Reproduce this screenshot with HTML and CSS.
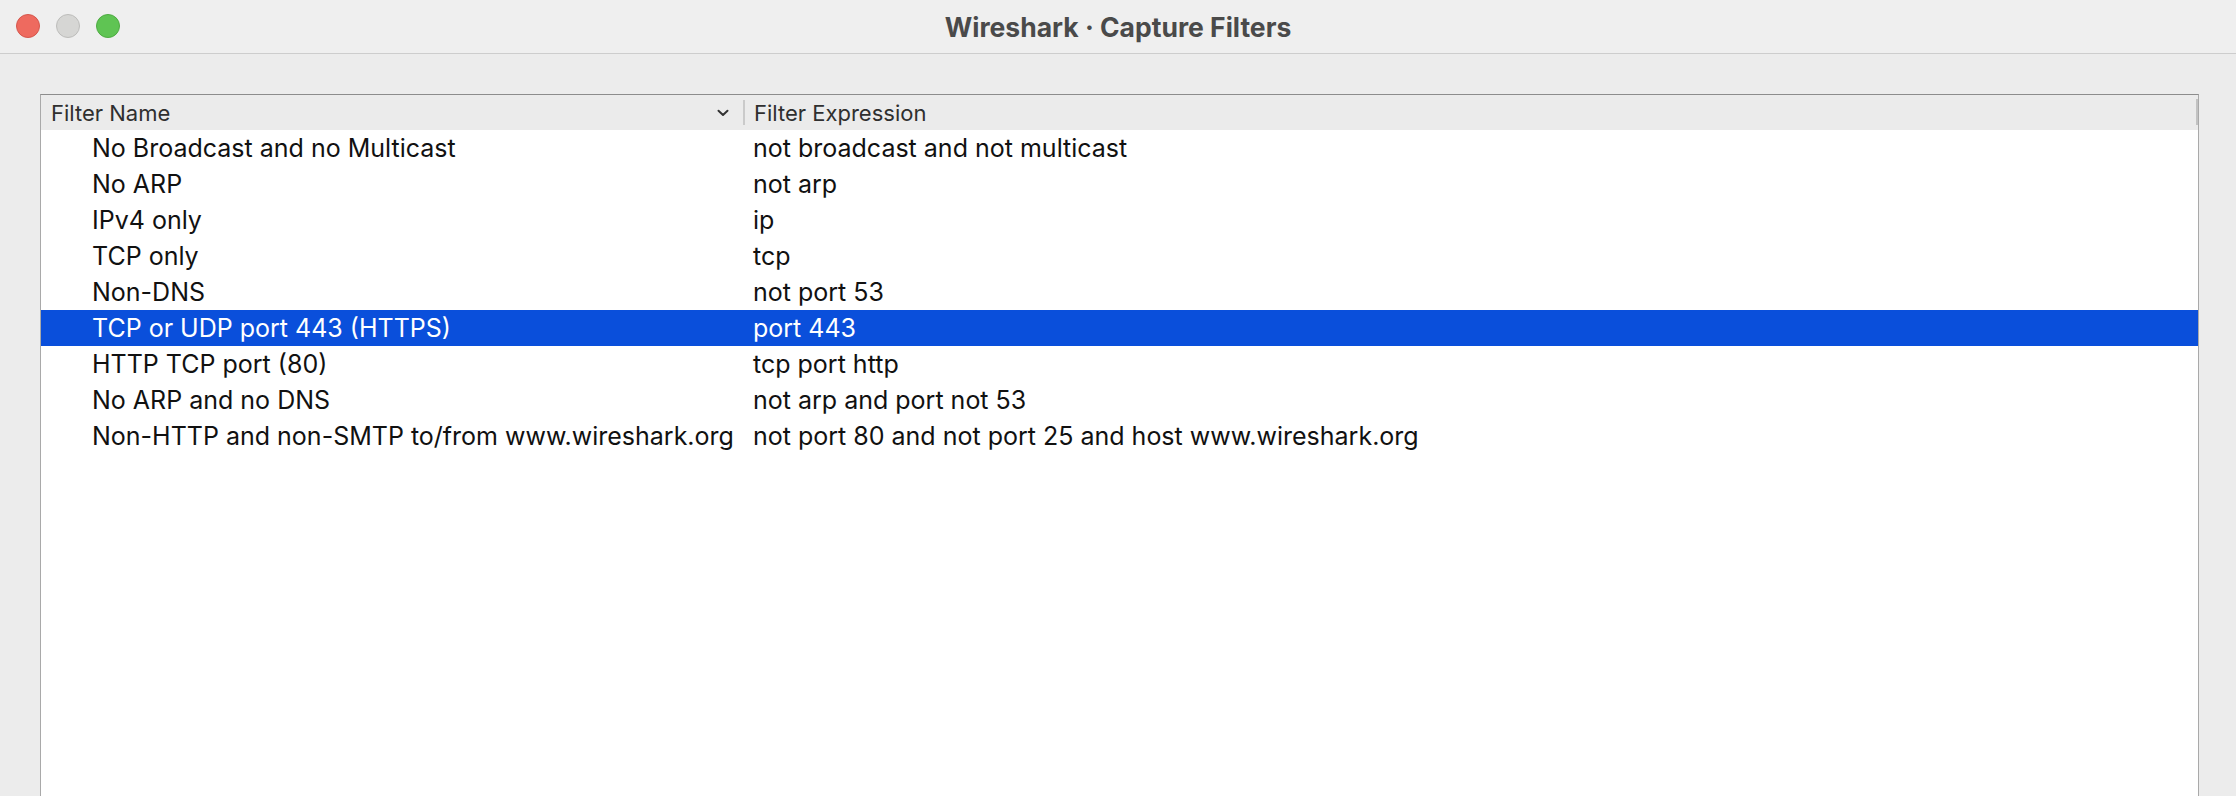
FILE: index.html
```html
<!DOCTYPE html>
<html>
<head>
<meta charset="utf-8">
<link rel="stylesheet" href="styles.css">
</head>
<body>
<div class="window">
  <div class="titlebar">
    <div class="lights">
      <span class="light red"></span>
      <span class="light gray"></span>
      <span class="light green"></span>
    </div>
    <div class="title">Wireshark · Capture Filters</div>
  </div>
  <div class="content">
    <div class="table">
      <div class="header">
        <div class="hcell first">
          <span>Filter Name</span>
          <svg class="chev" width="12" height="8" viewBox="0 0 12 8"><path d="M1.5 1.8 L6 6 L10.5 1.8" fill="none" stroke="#333" stroke-width="2" stroke-linecap="round" stroke-linejoin="round"/></svg>
        </div>
        <div class="hsep"></div>
        <div class="hcell second">Filter Expression</div>
        <div class="scrollmark"></div>
      </div>
      <div class="rows">
        <div class="row"><div class="c1">No Broadcast and no Multicast</div><div class="c2">not broadcast and not multicast</div></div>
        <div class="row"><div class="c1">No ARP</div><div class="c2">not arp</div></div>
        <div class="row"><div class="c1">IPv4 only</div><div class="c2">ip</div></div>
        <div class="row"><div class="c1">TCP only</div><div class="c2">tcp</div></div>
        <div class="row"><div class="c1">Non-DNS</div><div class="c2">not port 53</div></div>
        <div class="row selected"><div class="c1">TCP or UDP port 443 (HTTPS)</div><div class="c2">port 443</div></div>
        <div class="row"><div class="c1">HTTP TCP port (80)</div><div class="c2">tcp port http</div></div>
        <div class="row"><div class="c1">No ARP and no DNS</div><div class="c2">not arp and port not 53</div></div>
        <div class="row"><div class="c1">Non-HTTP and non-SMTP to/from www.wireshark.org</div><div class="c2">not port 80 and not port 25 and host www.wireshark.org</div></div>
      </div>
    </div>
  </div>
</div>
</body>
</html>
```
FILE: styles.css
```css
html, body {
  margin: 0;
  padding: 0;
  overflow: hidden;
  background: #ececec;
}
body {
  font-family: Inter, "Liberation Sans", sans-serif;
  width: 2236px;
  height: 796px;
}
.window {
  height: 796px;
  display: flex;
  flex-direction: column;
  overflow: hidden;
}
.titlebar {
  position: relative;
  height: 53px;
  flex: 0 0 53px;
  background: #efefef;
  border-bottom: 1px solid #cdcdcd;
  display: flex;
  align-items: center;
  justify-content: center;
}
.lights {
  position: absolute;
  left: 16px;
  top: 14px;
  display: flex;
  gap: 16px;
}
.light {
  width: 22px;
  height: 22px;
  border-radius: 50%;
  border: 1px solid rgba(0,0,0,0.12);
}
.red { background: #ee6a5f; border-color: #d5574d; }
.gray { background: #d6d6d4; border-color: #bdbdbb; }
.green { background: #5fc453; border-color: #4eab42; }
.title {
  font-size: 26.5px;
  font-weight: 700;
  color: #4a4a4a;
  margin-top: 1px;
}
.content {
  flex: 1;
  min-height: 0;
  display: flex;
  flex-direction: column;
  padding: 40px 37px 0 40px;
}
.table {
  position: relative;
  flex: 1;
  min-height: 0;
  overflow: hidden;
  background: #fff;
  border-left: 1px solid #a9a9a9;
  border-right: 1px solid #a9a9a9;
  border-top: 1px solid #8c8c8c;
}
.header {
  display: flex;
  align-items: center;
  height: 35px;
  background: #ebebeb;
  font-size: 22px;
  color: #2f2f2f;
}
.hcell.first {
  padding-left: 10px;
  display: flex;
  align-items: center;
  justify-content: space-between;
  padding-right: 14px;
  box-sizing: border-box;
  width: 702px;
}
.chev { margin-top: 1px; }
.hsep {
  width: 2px;
  height: 25px;
  background: #cacaca;
}
.hcell.second {
  padding-left: 9px;
}
.scrollmark {
  position: absolute;
  right: -1px;
  top: 4px;
  width: 3px;
  height: 26px;
  background: #c2c2c2;
}
.rows {
  display: flex;
  flex-direction: column;
}
.row {
  display: grid;
  grid-template-columns: 712px 1fr;
  height: 36px;
  align-items: center;
  font-size: 25px;
  color: #111;
}
.row .c1 { padding-left: 51px; }
.row .c2 { padding-left: 0; }
.row.selected {
  background: #0a4fdb;
  color: #fff;
}
```
